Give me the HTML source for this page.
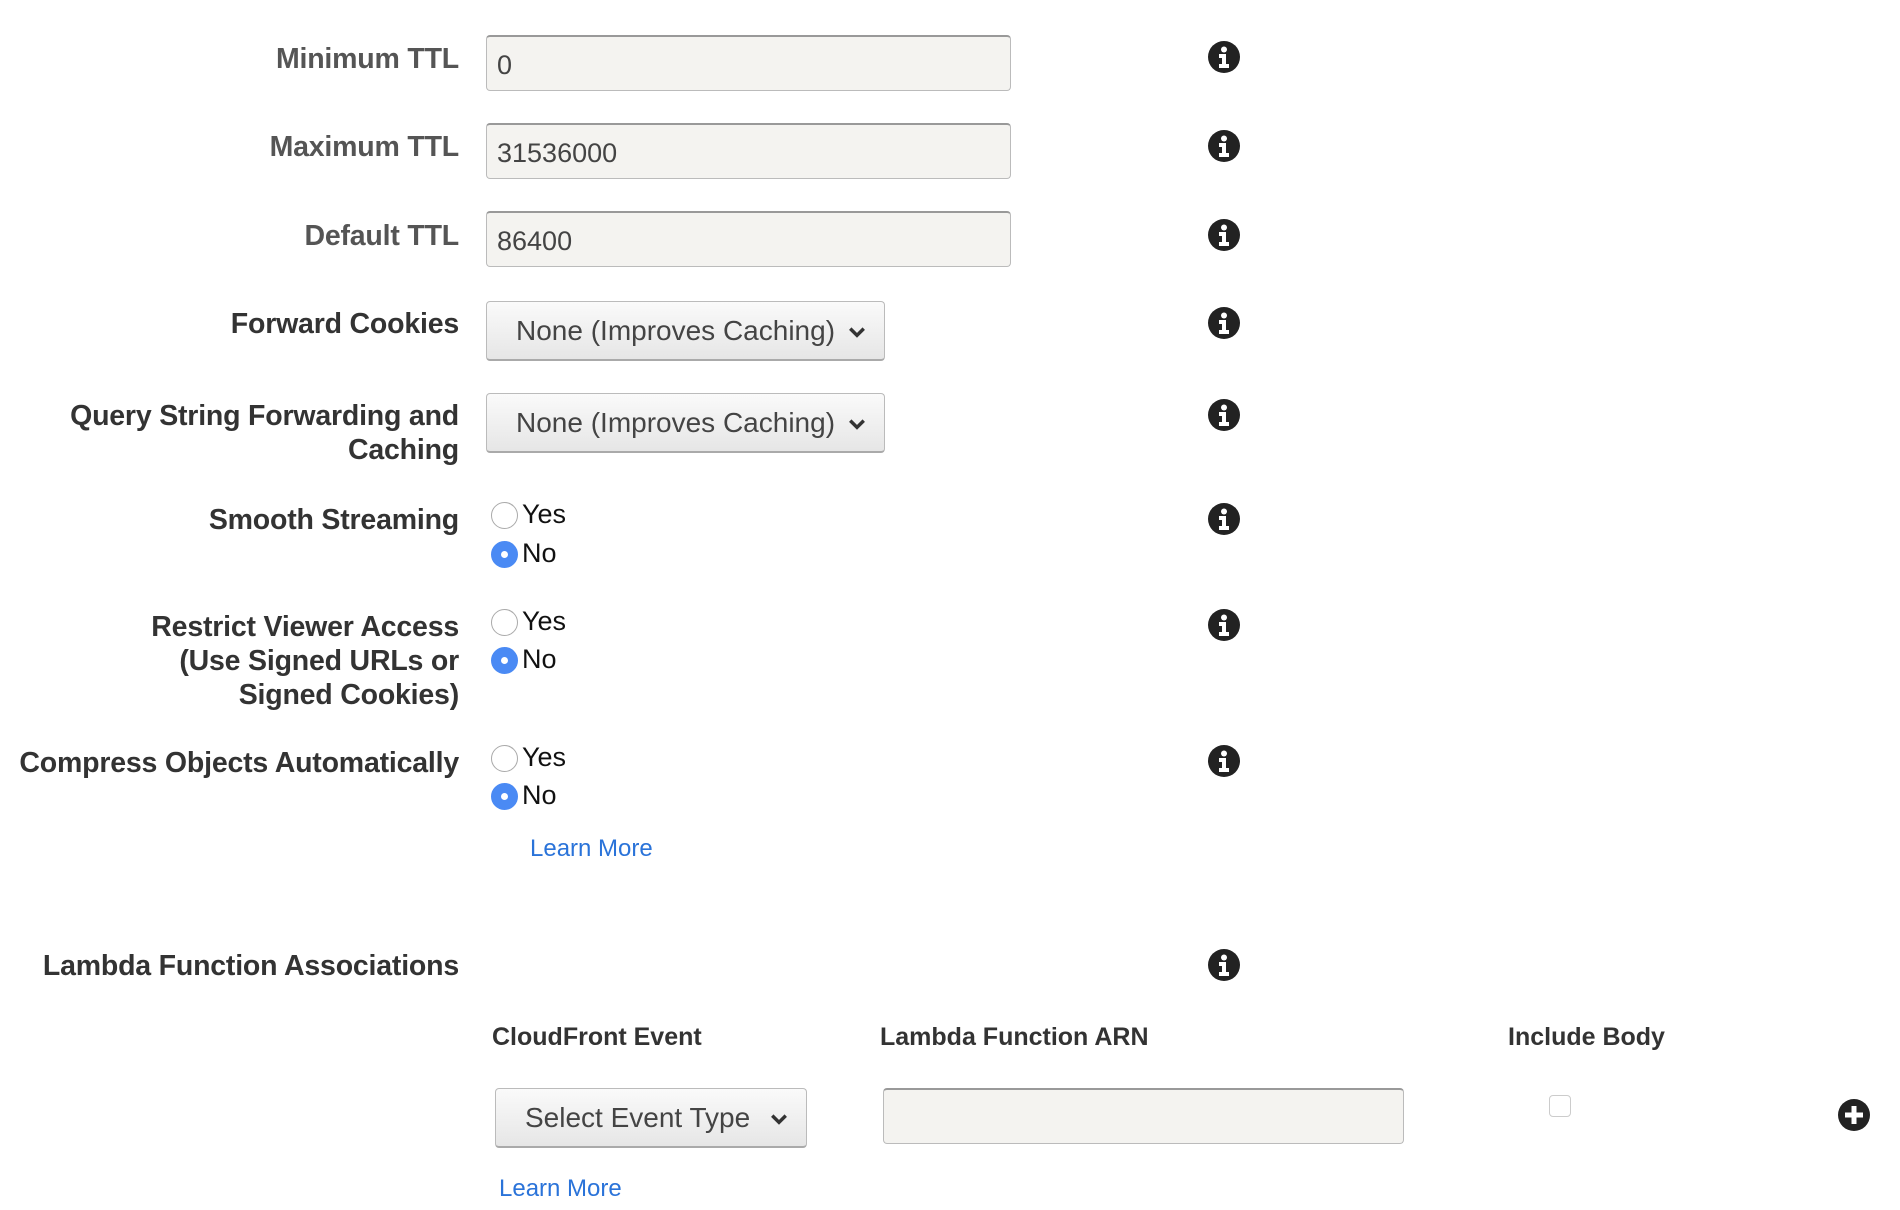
<!DOCTYPE html>
<html><head><meta charset="utf-8"><style>
body{margin:0;width:1900px;height:1210px;background:#fff;position:relative;overflow:hidden;font-family:"Liberation Sans",Arial,sans-serif}
.a{position:absolute}
.lbl{position:absolute;right:1441px;text-align:right;font-weight:bold;font-size:28.5px;line-height:34px;color:#333;white-space:nowrap;letter-spacing:-0.2px}
.gray{color:#555}
.inp{position:absolute;left:486px;width:525px;height:56px;background:#f4f3f0;border:1px solid #bbb;border-top:2px solid #999;border-radius:4px;font-size:27px;color:#444;line-height:56px;padding-left:10px;box-sizing:border-box}
.sel{position:absolute;height:60px;background:linear-gradient(#fafafa,#e6e6e6);border:1px solid #bbb;border-bottom:2px solid #aaa;border-radius:4px;box-sizing:border-box;font-size:28px;color:#444;line-height:58px;padding-left:29px}
.sel svg{position:absolute;right:18px;top:24px}
.info{position:absolute;left:1208px;width:32px;height:32px}
.rad{position:absolute;left:491px;width:27px;height:27px;border-radius:50%;border:1px solid #aaa;box-sizing:border-box;background:#fff}
.rad.on{background:#4a8af4;border-color:#4a8af4}
.rad.on:after{content:"";position:absolute;left:9px;top:9px;width:7px;height:7px;border-radius:50%;background:#fff}
.rt{position:absolute;left:522px;font-size:27px;color:#111;line-height:30px}
.link{position:absolute;color:#2a73d9;font-size:24px}
.hd{position:absolute;top:1023px;font-weight:bold;font-size:25px;color:#333}
</style></head><body>
<svg width="0" height="0" style="position:absolute"><defs><symbol id="i" viewBox="0 0 32 32"><circle cx="16" cy="16" r="16" fill="#222"/><circle cx="16" cy="8.5" r="3" fill="#fff"/><path d="M11 13h7v10h3v4H11v-4h3v-6h-3z" fill="#fff"/></symbol>
<symbol id="c" viewBox="0 0 16 10"><path d="M2 2l6 6 6-6" stroke="#333" stroke-width="3" fill="none"/></symbol></defs></svg>

<div class="lbl gray" style="top:42px">Minimum TTL</div>
<div class="inp" style="top:35px">0</div>
<svg class="info" style="top:41px"><use href="#i"/></svg>

<div class="lbl gray" style="top:130px">Maximum TTL</div>
<div class="inp" style="top:123px">31536000</div>
<svg class="info" style="top:130px"><use href="#i"/></svg>

<div class="lbl gray" style="top:219px">Default TTL</div>
<div class="inp" style="top:211px">86400</div>
<svg class="info" style="top:219px"><use href="#i"/></svg>

<div class="lbl" style="top:307px">Forward Cookies</div>
<div class="sel" style="left:486px;top:301px;width:399px">None (Improves Caching)<svg width="18" height="12"><use href="#c"/></svg></div>
<svg class="info" style="top:307px"><use href="#i"/></svg>

<div class="lbl" style="top:399px">Query String Forwarding and<br>Caching</div>
<div class="sel" style="left:486px;top:393px;width:399px">None (Improves Caching)<svg width="18" height="12"><use href="#c"/></svg></div>
<svg class="info" style="top:399px"><use href="#i"/></svg>

<div class="lbl" style="top:503px">Smooth Streaming</div>
<div class="rad" style="top:502px"></div><div class="rt" style="top:499px">Yes</div>
<div class="rad on" style="top:541px"></div><div class="rt" style="top:538px">No</div>
<svg class="info" style="top:503px"><use href="#i"/></svg>

<div class="lbl" style="top:610px">Restrict Viewer Access<br>(Use Signed URLs or<br>Signed Cookies)</div>
<div class="rad" style="top:609px"></div><div class="rt" style="top:606px">Yes</div>
<div class="rad on" style="top:647px"></div><div class="rt" style="top:644px">No</div>
<svg class="info" style="top:609px"><use href="#i"/></svg>

<div class="lbl" style="top:746px">Compress Objects Automatically</div>
<div class="rad" style="top:745px"></div><div class="rt" style="top:742px">Yes</div>
<div class="rad on" style="top:783px"></div><div class="rt" style="top:780px">No</div>
<svg class="info" style="top:745px"><use href="#i"/></svg>
<div class="link" style="left:530px;top:835px">Learn More</div>

<div class="lbl" style="top:949px">Lambda Function Associations</div>
<svg class="info" style="top:949px"><use href="#i"/></svg>

<div class="hd" style="left:492px">CloudFront Event</div>
<div class="hd" style="left:880px">Lambda Function ARN</div>
<div class="hd" style="left:1508px">Include Body</div>

<div class="sel" style="left:495px;top:1088px;width:312px">Select Event Type<svg width="18" height="12"><use href="#c"/></svg></div>
<div class="inp" style="left:883px;top:1088px;width:521px"></div>
<div class="a" style="left:1549px;top:1095px;width:22px;height:22px;border:1px solid #ccc;border-radius:4px;box-sizing:border-box"></div>
<svg class="a" style="left:1838px;top:1099px" width="32" height="32" viewBox="0 0 32 32"><circle cx="16" cy="16" r="16" fill="#222"/><path d="M13.5 7h5v6.5H25v5h-6.5V25h-5v-6.5H7v-5h6.5z" fill="#fff"/></svg>
<div class="link" style="left:499px;top:1175px">Learn More</div>
</body></html>
